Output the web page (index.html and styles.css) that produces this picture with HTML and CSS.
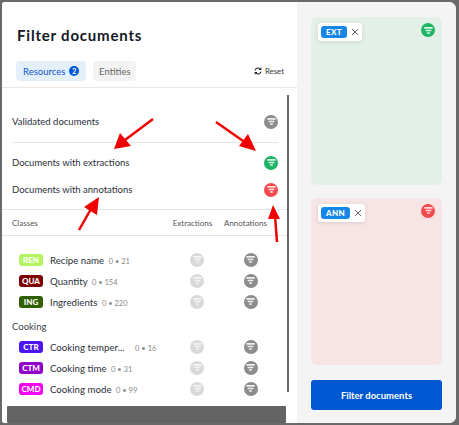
FILE: index.html
```html
<!DOCTYPE html>
<html lang="en">
<head>
    <meta charset="UTF-8">
    <meta name="viewport" content="width=device-width, initial-scale=1.0">
    <title>Filter documents</title>
    <link rel="stylesheet" href="styles.css">
</head>
<body>
<svg width="0" height="0" class="defs">
    <symbol id="funnel" viewBox="0 0 14 14">
        <rect x="1.5" y="2.5" width="11" height="2.2" rx="0.6" fill="currentColor"/>
        <rect x="3.2" y="6" width="7.6" height="2" rx="0.6" fill="currentColor"/>
        <rect x="5" y="9.2" width="4" height="2" rx="0.6" fill="currentColor"/>
    </symbol>
    <symbol id="cross" viewBox="0 0 8 8">
        <path d="M1 1L7 7M7 1L1 7" stroke="currentColor" stroke-width="0.9" fill="none"/>
    </symbol>
</svg>
<div class="modal">
    <div class="left">
        <h1 class="title">Filter documents</h1>
        <div class="tabs">
            <div class="tab tab-active">Resources <span class="count">2</span></div>
            <div class="tab tab-entities">Entities</div>
            <div class="reset">
                <svg width="8" height="8" viewBox="0 0 10 10" fill="none" stroke="#222" stroke-width="1.3">
                    <path d="M1.2 4.2A3.8 3.8 0 0 1 8 2.8M8.8 5.8A3.8 3.8 0 0 1 2 7.2"/>
                    <path d="M8.6 0.8V3.2H6.2M1.4 9.2V6.8H3.8"/>
                </svg>
                Reset
            </div>
        </div>
        <div class="scroll-area">
            <div class="content">
                <div class="doc-row doc-first">
                    <span>Validated documents</span>
                    <span class="filter f-gray"><svg><use href="#funnel"/></svg></span>
                </div>
                <div class="doc-sep"></div>
                <div class="doc-row">
                    <span>Documents with extractions</span>
                    <span class="filter f-green"><svg><use href="#funnel"/></svg></span>
                </div>
                <div class="doc-row">
                    <span>Documents with annotations</span>
                    <span class="filter f-red"><svg><use href="#funnel"/></svg></span>
                </div>
                <div class="class-head">
                    <span class="class-head-name">Classes</span>
                    <span class="class-head-col">Extractions</span>
                    <span class="class-head-col">Annotations</span>
                </div>
                <div class="class-list">
                    <div class="class-row">
                        <span class="tag t-ren">REN</span>
                        <span class="class-name">Recipe name <small>0 • 21</small></span>
                        <span class="cell"><span class="filter f-light"><svg><use href="#funnel"/></svg></span></span>
                        <span class="cell"><span class="filter f-gray"><svg><use href="#funnel"/></svg></span></span>
                    </div>
                    <div class="class-row">
                        <span class="tag t-qua">QUA</span>
                        <span class="class-name">Quantity <small>0 • 154</small></span>
                        <span class="cell"><span class="filter f-light"><svg><use href="#funnel"/></svg></span></span>
                        <span class="cell"><span class="filter f-gray"><svg><use href="#funnel"/></svg></span></span>
                    </div>
                    <div class="class-row">
                        <span class="tag t-ing">ING</span>
                        <span class="class-name">Ingredients <small>0 • 220</small></span>
                        <span class="cell"><span class="filter f-light"><svg><use href="#funnel"/></svg></span></span>
                        <span class="cell"><span class="filter f-gray"><svg><use href="#funnel"/></svg></span></span>
                    </div>
                    <div class="group">Cooking</div>
                    <div class="class-row">
                        <span class="tag t-ctr">CTR</span>
                        <span class="class-name"><span class="clip">Cooking temper...</span> <small>0 • 16</small></span>
                        <span class="cell"><span class="filter f-light"><svg><use href="#funnel"/></svg></span></span>
                        <span class="cell"><span class="filter f-gray"><svg><use href="#funnel"/></svg></span></span>
                    </div>
                    <div class="class-row">
                        <span class="tag t-ctm">CTM</span>
                        <span class="class-name">Cooking time <small>0 • 31</small></span>
                        <span class="cell"><span class="filter f-light"><svg><use href="#funnel"/></svg></span></span>
                        <span class="cell"><span class="filter f-gray"><svg><use href="#funnel"/></svg></span></span>
                    </div>
                    <div class="class-row">
                        <span class="tag t-cmd">CMD</span>
                        <span class="class-name">Cooking mode <small>0 • 99</small></span>
                        <span class="cell"><span class="filter f-light"><svg><use href="#funnel"/></svg></span></span>
                        <span class="cell"><span class="filter f-gray"><svg><use href="#funnel"/></svg></span></span>
                    </div>
                </div>
            </div>
            <div class="v-scroll"></div>
        </div>
        <div class="h-scroll"></div>
    </div>
    <div class="right">
        <div class="drop drop-green">
            <div class="chip"><span class="chip-tag">EXT</span><svg class="chip-x"><use href="#cross"/></svg></div>
            <span class="filter f-green"><svg><use href="#funnel"/></svg></span>
        </div>
        <div class="drop drop-red">
            <div class="chip"><span class="chip-tag">ANN</span><svg class="chip-x"><use href="#cross"/></svg></div>
            <span class="filter f-red"><svg><use href="#funnel"/></svg></span>
        </div>
        <button class="apply">Filter documents</button>
    </div>
</div>
<!-- red annotation arrows drawn over the screenshot -->
<svg class="arrows" width="459" height="425" viewBox="0 0 459 425">
    <g stroke="#f00000" stroke-width="2.5" fill="#f00000">
        <line x1="153" y1="119" x2="125" y2="140"/>
        <polygon points="114,149 120,133 131,146" stroke="none"/>
        <line x1="216" y1="122" x2="246" y2="143"/>
        <polygon points="256,151 239,146 248,134" stroke="none"/>
        <line x1="79" y1="230" x2="91" y2="209"/>
        <polygon points="99,197 97,215 84,207" stroke="none"/>
        <line x1="277" y1="242" x2="275" y2="216"/>
        <polygon points="273,205 280,219 268,219" stroke="none"/>
    </g>
</svg>
</body>
</html>
```
FILE: styles.css
```css
* {
    box-sizing: border-box;
}
html, body {
    margin: 0;
    height: 425px;
    overflow: hidden;
}
body {
    font-family: Lato, "Open Sans", sans-serif;
    background-color: #6a6a6a;
    color: #2b2f3a;
    padding: 2px 3px 2px 2px;
}
.defs {
    position: absolute;
}
.modal {
    display: flex;
    height: 421px;
    border-radius: 3px 7px 7px 3px;
    overflow: hidden;
    background: #fff;
}
.left {
    width: 295px;
    display: flex;
    flex-direction: column;
    background: #fff;
}
.title {
    margin: 0;
    padding: 23px 0 0 15px;
    font-size: 15px;
    line-height: 20px;
    font-weight: 700;
    color: #14171f;
    letter-spacing: 0.8px;
}
.tabs {
    display: flex;
    align-items: center;
    gap: 7px;
    margin-top: 16px;
    padding: 0 13px 6px 14px;
    height: 27px;
    border-bottom: 1px solid #e8e8e8;
}
.tab {
    height: 20px;
    padding: 0 7px;
    border-radius: 4px;
    background: #f3f3f3;
    color: #666;
    font-size: 9.5px;
    display: flex;
    align-items: center;
    gap: 4px;
}
.tab-active {
    background: #e3f0fa;
    color: #0f55c8;
}
.tab-entities {
    width: 43px;
    padding: 0;
    justify-content: center;
}
.count {
    width: 10px;
    height: 10px;
    border-radius: 50%;
    background: #0057d2;
    color: #fff;
    font-size: 7px;
    font-weight: 700;
    display: flex;
    align-items: center;
    justify-content: center;
}
.reset {
    margin-left: auto;
    font-size: 7.8px;
    color: #333;
    display: flex;
    align-items: center;
    gap: 3px;
}
.scroll-area {
    flex: 1;
    display: flex;
    min-height: 0;
}
.content {
    width: 285px;
    font-size: 9.5px;
}
.v-scroll {
    width: 2px;
    height: 297px;
    margin-top: 7px;
    background: #666;
}
.h-scroll {
    height: 17px;
    margin: 0 11px 0 5px;
    background: #646464;
    border-radius: 1px;
}
.doc-row {
    height: 27px;
    padding: 0 9px 0 10px;
    display: flex;
    align-items: center;
    justify-content: space-between;
}
.doc-first {
    margin-top: 20px;
}
.doc-sep {
    height: 1px;
    margin: 7px 9px 6px 10px;
    background: #e6e6e6;
}
.filter {
    width: 14px;
    height: 14px;
    border-radius: 50%;
    display: flex;
    align-items: center;
    justify-content: center;
    flex: none;
}
.filter svg {
    width: 11px;
    height: 11px;
}
.f-gray { background: #8c8c8c; color: #eee; }
.f-light { background: #d9d9d9; color: #f4f4f4; }
.f-green { background: #1fb466; color: #d6f5e4; }
.f-red { background: #f44a4e; color: #ffdcdc; }
.class-head {
    display: flex;
    align-items: center;
    height: 27px;
    margin-top: 6px;
    padding: 0 15px 0 10px;
    border-top: 1px solid #e6e6e6;
    border-bottom: 1px solid #e6e6e6;
    font-size: 8px;
    color: #555;
}
.class-head-name {
    flex: 1;
}
.class-head-col {
    width: 53px;
    text-align: center;
}
.class-list {
    padding: 13px 10px 0 10px;
}
.class-row {
    display: flex;
    align-items: center;
    height: 21px;
}
.tag {
    width: 24px;
    height: 12px;
    margin-left: 7px;
    border-radius: 3px;
    color: #fff;
    font-size: 8px;
    font-weight: 900;
    text-align: center;
    line-height: 12px;
    flex: none;
}
.t-ren { background: #b4f55f; }
.t-qua { background: #7d0000; }
.t-ing { background: #2f5f00; }
.t-ctr { background: #4a14f5; }
.t-ctm { background: #9000c8; }
.t-cmd { background: #f500f0; }
.class-name {
    flex: 1;
    margin-left: 7px;
    font-size: 9.7px;
    white-space: nowrap;
}
.class-name small {
    font-size: 7.5px;
    color: #888;
    margin-left: 2px;
}
.clip {
    margin-right: 6px;
}
.cell {
    width: 53px;
    display: flex;
    justify-content: center;
}
.cell:nth-of-type(3) {
    padding-right: 1px;
}
.group {
    height: 24px;
    padding-top: 9px;
    font-size: 9.5px;
    color: #444;
}
.right {
    flex: 1;
    display: flex;
    flex-direction: column;
    gap: 13px;
    padding: 15px 14px 13px 14px;
    background: #f4f4f4;
}
.drop {
    flex: 1;
    padding: 6px 7px;
    border-radius: 6px;
    display: flex;
    justify-content: space-between;
    align-items: flex-start;
}
.drop-green { background: #e3f0e8; }
.drop-red { background: #f6e5e4; }
.chip {
    display: flex;
    align-items: center;
    gap: 4px;
    height: 18px;
    padding: 0 3px 0 3px;
    background: #fff;
    border-radius: 3px;
    box-shadow: 0 1px 4px rgba(0, 0, 0, 0.12);
}
.chip-tag {
    height: 12px;
    padding: 0 5px;
    border-radius: 3px;
    background: #1587e8;
    color: #fff;
    font-size: 8px;
    font-weight: 900;
    line-height: 12px;
    letter-spacing: 0.3px;
}
.chip-x {
    width: 8px;
    height: 8px;
    color: #555;
}
.apply {
    height: 30px;
    flex: none;
    margin-top: 2px;
    border: none;
    border-radius: 3px;
    background: #0057d2;
    color: #fff;
    font-family: inherit;
    font-size: 9.5px;
    font-weight: 700;
}
.arrows {
    position: absolute;
    top: 0;
    left: 0;
    pointer-events: none;
}
```
